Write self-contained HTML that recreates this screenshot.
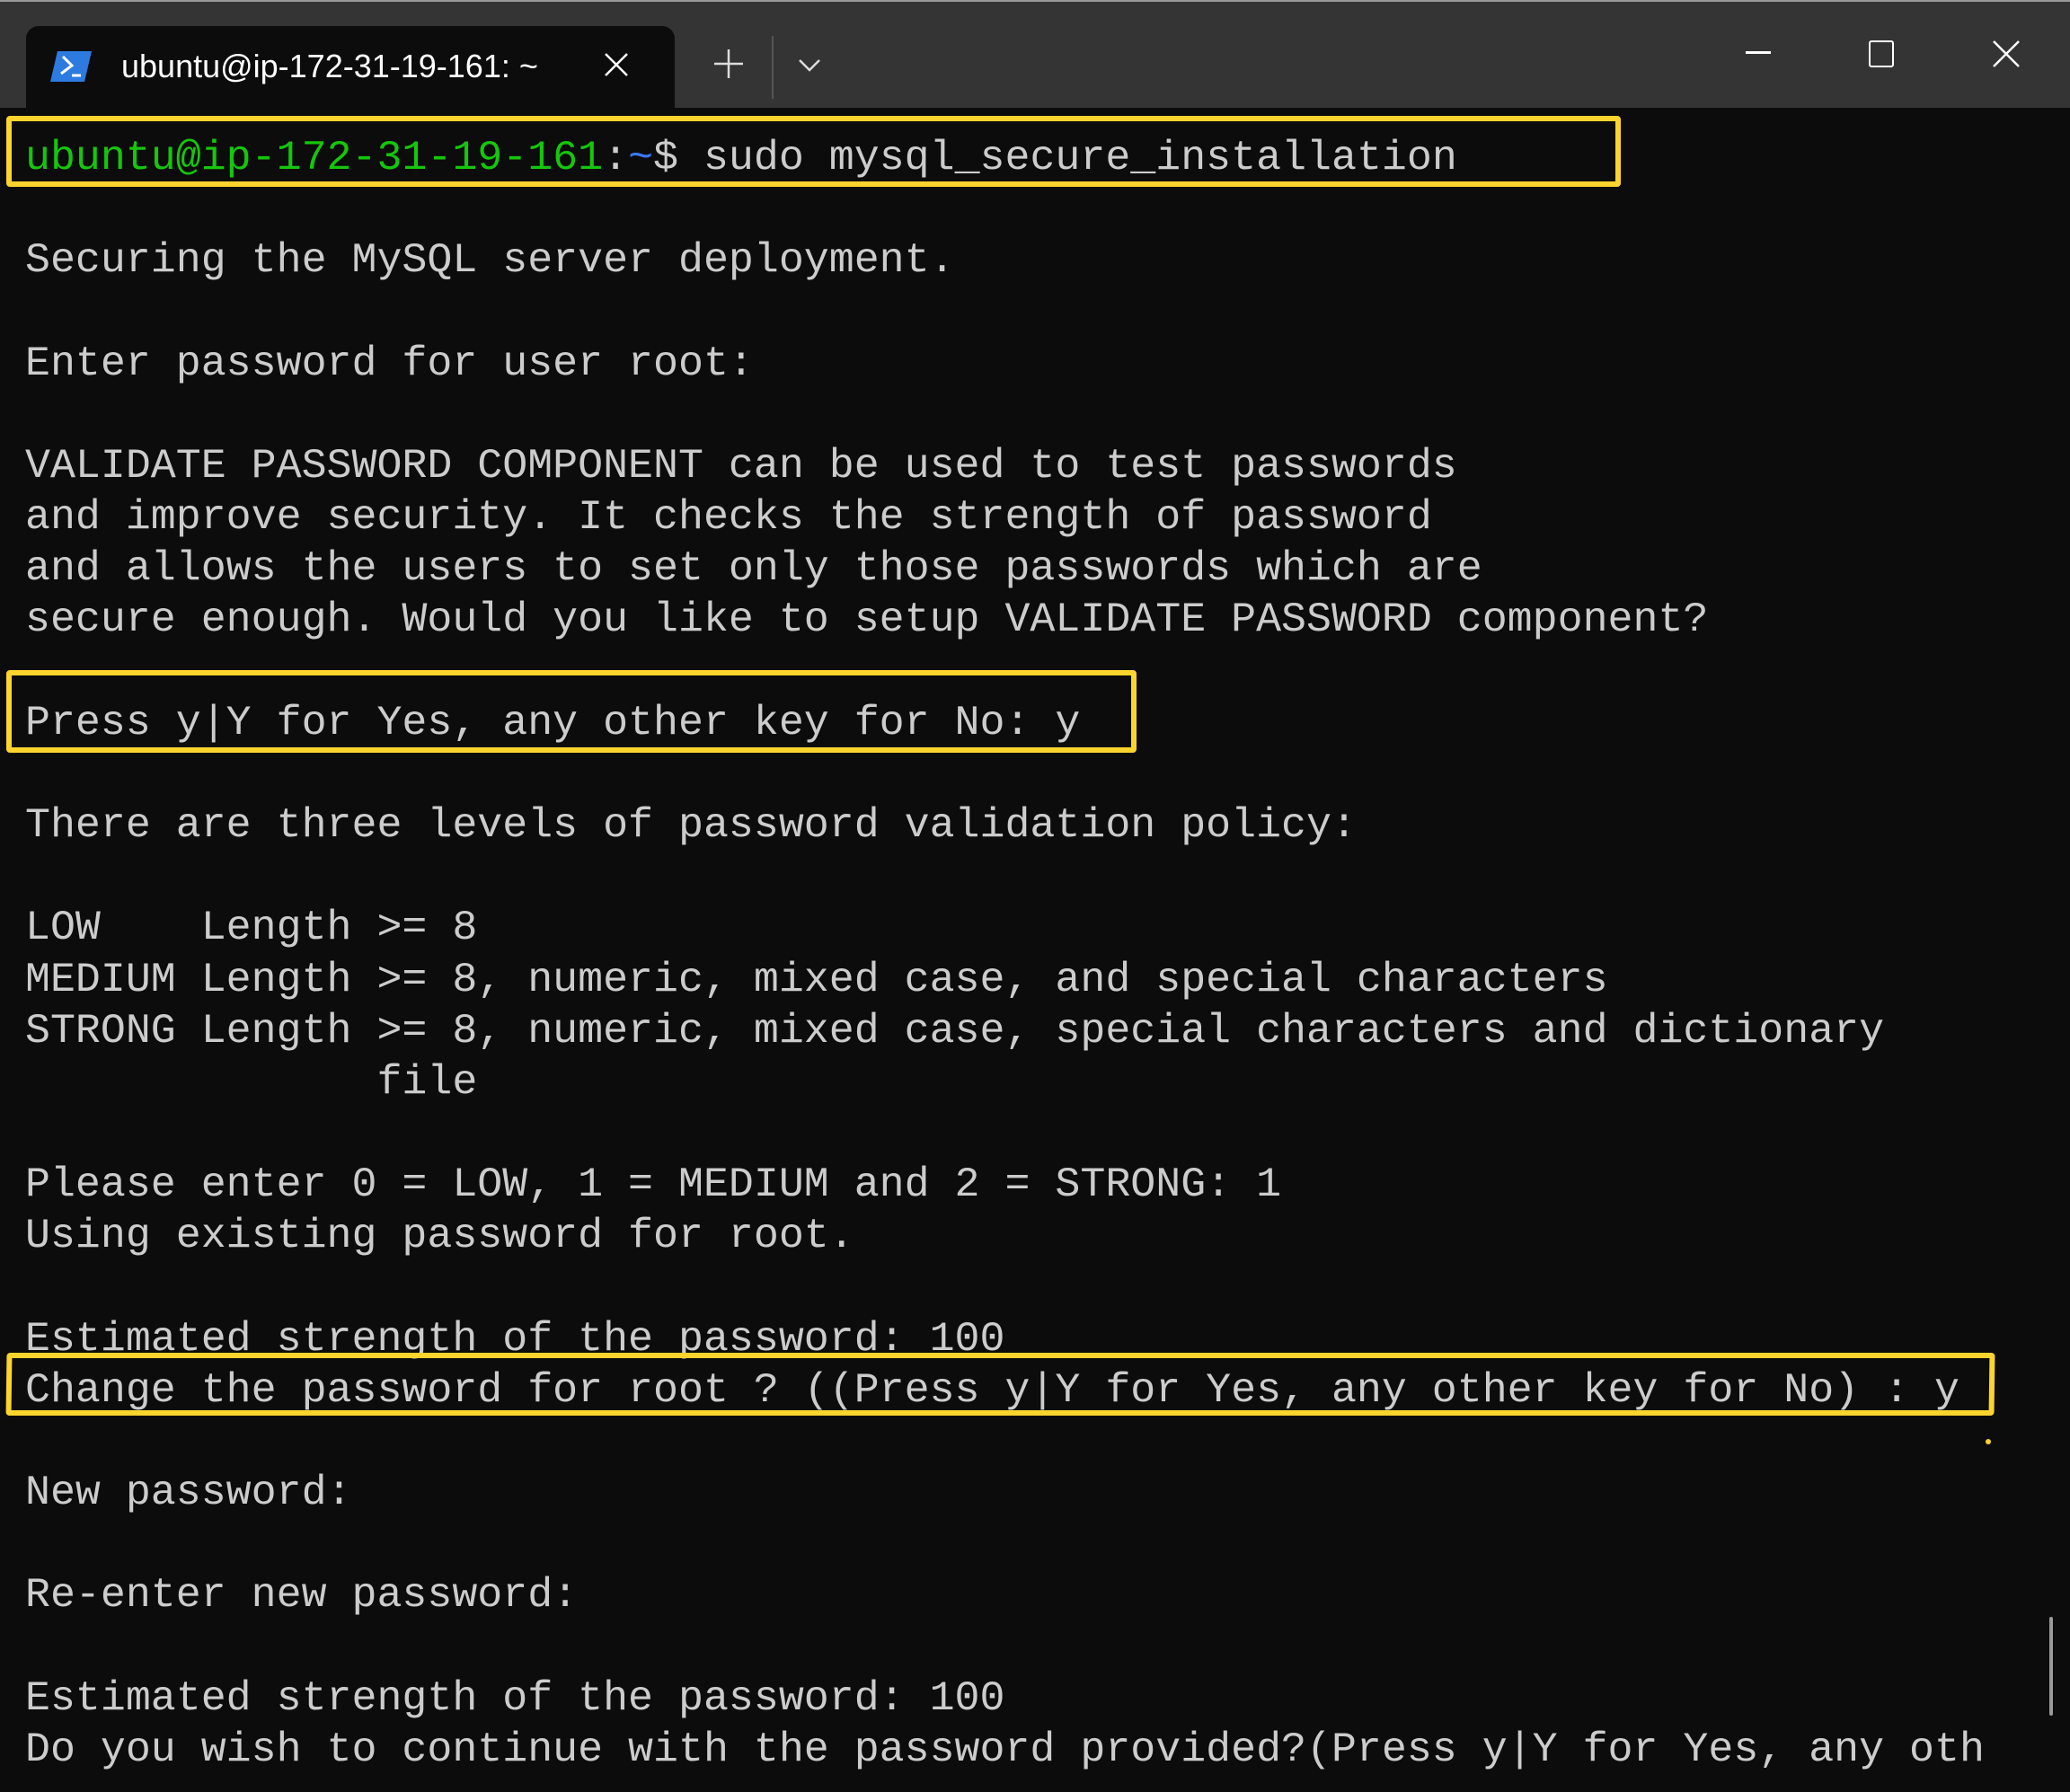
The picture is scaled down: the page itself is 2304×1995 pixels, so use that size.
<!DOCTYPE html>
<html><head><meta charset="utf-8"><style>
html,body{margin:0;padding:0;width:2304px;height:1995px;background:#0c0c0c;overflow:hidden;}
#title{position:absolute;left:0;top:0;width:2304px;height:120px;background:#343434;border-top:2px solid #9a9a9a;box-sizing:border-box;}
#tab{position:absolute;left:29px;top:29px;width:722px;height:92px;background:#0c0c0c;border-radius:14px 14px 0 0;}
#tabtext{position:absolute;left:135px;top:53px;font:36px "Liberation Sans",sans-serif;color:#fff;}
.term{position:absolute;left:28px;top:147px;font-family:"Liberation Mono",monospace;font-size:46.6px;line-height:57.16px;color:#cccccc;white-space:pre;}
.g{color:#16c60c}.b{color:#3b78ff}
.box{position:absolute;border:6px solid #fbd42e;border-radius:4px;box-sizing:border-box;}
</style></head><body>
<div id="title"></div>
<div id="tab"></div>
<svg style="position:absolute;left:56px;top:55px" width="48" height="38" viewBox="0 0 48 38"><path d="M8 2h38l-8 34H0z" fill="#2d7be0"/><path d="M14 8l10 10-12 9" stroke="#fff" stroke-width="3" fill="none"/><path d="M24 29h10" stroke="#fff" stroke-width="3"/></svg>
<div id="tabtext">ubuntu@ip-172-31-19-161: ~</div>
<svg style="position:absolute;left:672px;top:58px" width="28" height="28"><path d="M2 2L26 26M26 2L2 26" stroke="#fff" stroke-width="2.5"/></svg>
<svg style="position:absolute;left:795px;top:55px" width="32" height="32"><path d="M16 0V32M0 16H32" stroke="#ddd" stroke-width="2.5"/></svg>
<div style="position:absolute;left:859px;top:40px;width:2px;height:70px;background:#555"></div>
<svg style="position:absolute;left:888px;top:65px" width="26" height="16"><path d="M2 2L13 13 24 2" stroke="#ddd" stroke-width="2.5" fill="none"/></svg>
<div style="position:absolute;left:1943px;top:57px;width:28px;height:3px;background:#fff"></div>
<div style="position:absolute;left:2080px;top:45px;width:28px;height:30px;border:2.5px solid #fff;border-radius:3px;box-sizing:border-box"></div>
<svg style="position:absolute;left:2218px;top:45px" width="30" height="30"><path d="M1 1L29 29M29 1L1 29" stroke="#fff" stroke-width="2.5"/></svg>
<div class="term"><span class="g">ubuntu@ip-172-31-19-161</span>:<span class="b">~</span>$ sudo mysql_secure_installation

Securing the MySQL server deployment.

Enter password for user root:

VALIDATE PASSWORD COMPONENT can be used to test passwords
and improve security. It checks the strength of password
and allows the users to set only those passwords which are
secure enough. Would you like to setup VALIDATE PASSWORD component?

Press y|Y for Yes, any other key for No: y

There are three levels of password validation policy:

LOW    Length >= 8
MEDIUM Length >= 8, numeric, mixed case, and special characters
STRONG Length >= 8, numeric, mixed case, special characters and dictionary
              file

Please enter 0 = LOW, 1 = MEDIUM and 2 = STRONG: 1
Using existing password for root.

Estimated strength of the password: 100
Change the password for root ? ((Press y|Y for Yes, any other key for No) : y

New password:

Re-enter new password:

Estimated strength of the password: 100
Do you wish to continue with the password provided?(Press y|Y for Yes, any oth</div>
<div class="box" style="left:7px;top:129px;width:1797px;height:79px"></div>
<div class="box" style="left:7px;top:746px;width:1258px;height:92px"></div>
<div class="box" style="left:7px;top:1506px;width:2213px;height:70px;transform:skewX(-0.8deg)"></div>
<div style="position:absolute;left:2210px;top:1602px;width:6px;height:6px;border-radius:3px;background:#fbd42e"></div>
<div style="position:absolute;left:2281px;top:1800px;width:4px;height:110px;border-radius:2px;background:#999"></div>
</body></html>
